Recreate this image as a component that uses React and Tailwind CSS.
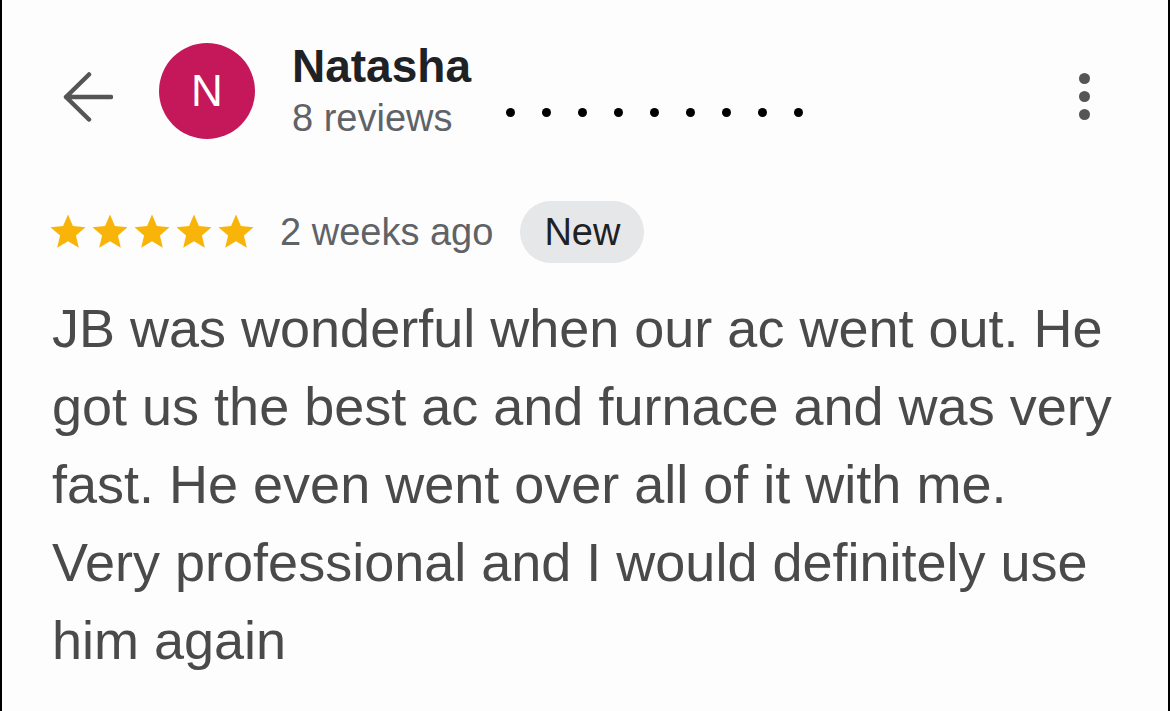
import React from 'react';

const Star = () => (
    <svg width="42" height="42" viewBox="0 0 24 24" className="block">
        <path fill="#f9b40a" d="M12 17.27L18.18 21l-1.64-7.03L22 9.24l-7.19-.61L12 2 9.19 8.63 2 9.24l5.46 4.73L5.82 21z" />
    </svg>
);

const App = () => {
    return (
        <div className="w-full h-[711px] bg-[#fdfdfd] border-x-2 border-black overflow-hidden font-['Liberation_Sans',Arial,sans-serif]">
            {/* Header */}
            <div className="flex items-start pt-[40px] pl-[59px]">
                <svg width="52" height="52" viewBox="0 0 52 52" className="mt-[31px] shrink-0">
                    <path d="M50 26H5M28 3.5L5 26l23 22.5" fill="none" stroke="#555" strokeWidth="4.5" strokeLinecap="round" strokeLinejoin="round" />
                </svg>
                <div className="ml-[46px] mt-[3px] w-[96px] h-[96px] rounded-full bg-[#c4185a] flex items-center justify-center shrink-0">
                    <span className="text-white text-[44px] leading-none">N</span>
                </div>
                <div className="ml-[37px] w-[200px] shrink-0">
                    <div className="text-[46px] leading-[52px] font-bold text-[#202124]">Natasha</div>
                    <div className="text-[38px] leading-[52px] text-[#5f6368]">8 reviews</div>
                </div>
                <div className="flex gap-[27px] mt-[68px] ml-[14px]">
                    {Array.from({ length: 9 }).map((_, i) => (
                        <span key={i} className="w-[9px] h-[9px] rounded-full bg-black" />
                    ))}
                </div>
                <div className="ml-auto mr-[78px] mt-[33px] flex flex-col gap-[7px]">
                    <span className="w-[11px] h-[11px] rounded-full bg-[#555]" />
                    <span className="w-[11px] h-[11px] rounded-full bg-[#555]" />
                    <span className="w-[11px] h-[11px] rounded-full bg-[#555]" />
                </div>
            </div>

            {/* Rating row */}
            <div className="flex items-center mt-[57px] pl-[45px] h-[62px]">
                <div className="flex">
                    <Star /><Star /><Star /><Star /><Star />
                </div>
                <span className="ml-[23px] text-[38px] text-[#5f6368]">2 weeks ago</span>
                <span className="ml-[27px] h-[62px] px-[24px] rounded-full bg-[#e6e7e9] flex items-center text-[38px] text-[#202124]">New</span>
            </div>

            {/* Review text */}
            <p className="mt-[26px] ml-[50px] w-[1072px] text-[54px] leading-[78px] text-[#4a4a4a]">
                JB was wonderful when our ac went out. He got us the best ac and furnace and was very fast. He even went over all of it with me. Very professional and I would definitely use him again
            </p>
        </div>
    );
};

export default App;
